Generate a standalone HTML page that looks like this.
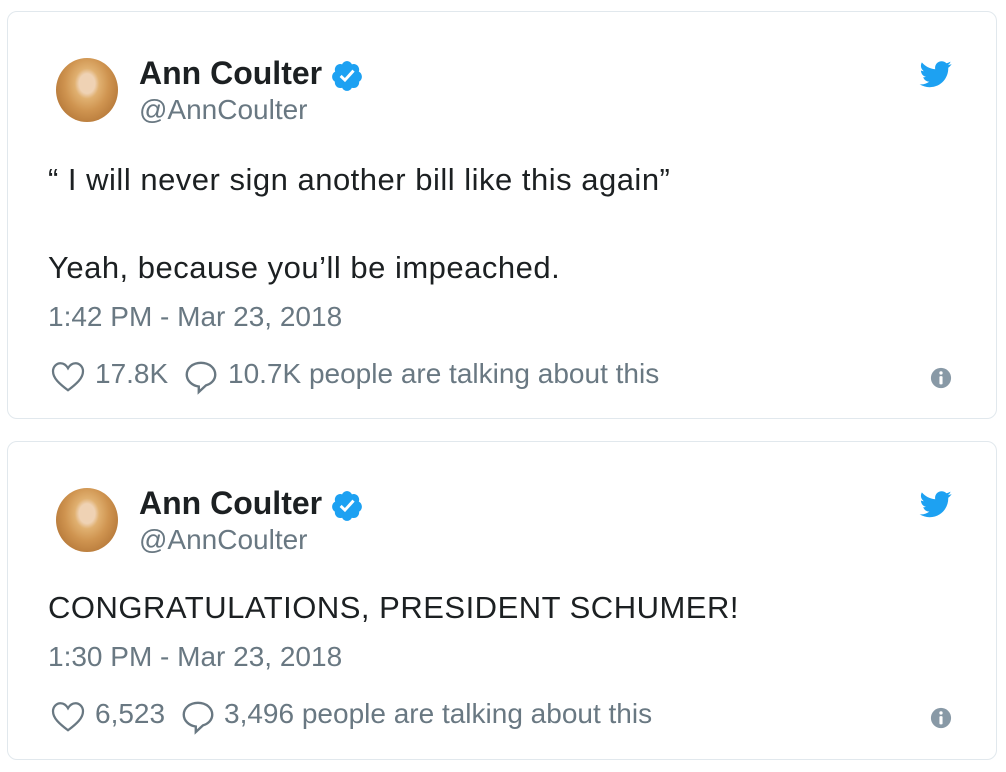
<!DOCTYPE html>
<html><head><style>
body{margin:0;background:#fff;width:1006px;height:772px;position:relative;font-family:"Liberation Sans",Arial,sans-serif;overflow:hidden}
.card{position:absolute;left:7px;width:988px;border:1px solid #e1e8ed;border-radius:10px;background:#fff}
.av{position:absolute;left:56px;width:62px;height:64px;border-radius:50%;background:radial-gradient(ellipse at 50% 40%,#efd2b4 0 18%,#e0b070 28%,#cf9450 50%,#b97c3c 75%,#fff 78%)}
.t{position:absolute;white-space:nowrap;line-height:40px}
.name{left:139px;font-size:32px;font-weight:bold;color:#1c2022}
.handle{left:139px;font-size:28px;color:#697882}
.txt{left:48px;font-size:31px;letter-spacing:0.5px;color:#1c2022}
.date{left:48px;font-size:28px;color:#697882}
.stat{font-size:28px;color:#697882}
</style></head><body>
<svg width="0" height="0" style="position:absolute"><defs>
<symbol id="ver" viewBox="0 0 24 24"><path fill="#1da1f2" d="M22.5 12.5c0-1.58-.875-2.95-2.148-3.6.154-.435.238-.905.238-1.4 0-2.21-1.710-3.998-3.818-3.998-.47 0-.92.084-1.336.25C14.818 2.415 13.51 1.5 12 1.5s-2.816.917-3.437 2.250c-.415-.165-.866-.25-1.336-.25-2.110 0-3.818 1.790-3.818 4 0 .494.083.964.237 1.400-1.272.65-2.147 2.018-2.147 3.600 0 1.495.782 2.798 1.942 3.486-.02.17-.032.34-.032.514 0 2.210 1.708 4 3.818 4 .47 0 .92-.086 1.335-.25.62 1.334 1.926 2.25 3.437 2.25 1.512 0 2.818-.916 3.437-2.25.415.163.865.248 1.336.248 2.110 0 3.818-1.790 3.818-4 0-.174-.012-.344-.033-.513 1.158-.687 1.943-1.990 1.943-3.484z"/><path fill="#fff" d="M10.6 16.3l-3.8-3.6 1.4-1.5 2.3 2.2 5.3-5.9 1.6 1.4z"/></symbol>
<symbol id="bird" viewBox="0 0 24 24"><path fill="#1da1f2" d="M23.6 4.6c-.9.4-1.8.6-2.8.8 1-.6 1.8-1.6 2.1-2.7-.9.6-2 1-3.1 1.2-.9-1-2.2-1.5-3.6-1.5-2.7 0-4.9 2.2-4.9 4.9 0 .4 0 .8.1 1.1C7.4 8.2 3.8 6.2 1.4 3.3 1 4 .7 4.9.7 5.8c0 1.7.9 3.2 2.2 4.1-.8 0-1.6-.2-2.2-.6v.1c0 2.4 1.7 4.4 3.9 4.8-.4.1-.8.2-1.3.2-.3 0-.6 0-.9-.1.6 2 2.4 3.4 4.6 3.4-1.7 1.3-3.8 2.1-6.1 2.1-.4 0-.8 0-1.2-.1 2.2 1.4 4.8 2.2 7.5 2.2 9.1 0 14-7.5 14-14v-.6c1-.7 1.8-1.6 2.4-2.5z"/></symbol>
<symbol id="heart" viewBox="0 0 24 24"><path fill="none" stroke="#697882" stroke-width="1.5" d="M12 21.5C6 17 2 13.3 2 8.8 2 5.8 4.3 3.5 7 3.5c2.2 0 3.9 1.4 5 3.3 1.1-1.9 2.8-3.300 5-3.3 2.7 0 5 2.3 5 5.3 0 4.5-4 8.2-10 12.7z"/></symbol>
<symbol id="bub" viewBox="0 0 24 24"><path fill="none" stroke="#697882" stroke-width="1.5" d="M12 3C6.8 3 3 6.4 3 10.5c0 3.8 3.3 7 7.6 7.5v3.5l4.5-4.2C18.7 16.3 21 13.6 21 10.5 21 6.4 17.2 3 12 3z"/></symbol>
<symbol id="info" viewBox="0 0 24 24"><circle cx="12" cy="12" r="11" fill="#8899a6"/><circle cx="12" cy="6.5" r="1.8" fill="#fff"/><rect x="10.3" y="10" width="3.4" height="9" rx="1" fill="#fff"/></symbol>
</defs></svg>

<div class="card" style="top:11px;height:406px"></div>
<div class="av" style="top:58px"></div>
<div class="t name" style="top:53px">Ann Coulter</div>
<svg class="t" style="left:330px;top:59px" width="34" height="34"><use href="#ver"/></svg>
<div class="t handle" style="top:90px">@AnnCoulter</div>
<svg class="t" style="left:918px;top:58px" width="36" height="32"><use href="#bird"/></svg>
<div class="t txt" style="top:160px">“ I will never sign another bill like this again”</div>
<div class="t txt" style="top:248px">Yeah, because you’ll be impeached.</div>
<div class="t date" style="top:297px">1:42 PM - Mar 23, 2018</div>
<svg class="t" style="left:50px;top:358px" width="36" height="36"><use href="#heart"/></svg>
<div class="t stat" style="left:95px;top:354px">17.8K</div>
<svg class="t" style="left:182px;top:358px" width="38" height="38"><use href="#bub"/></svg>
<div class="t stat" style="left:228px;top:354px">10.7K people are talking about this</div>
<svg class="t" style="left:930px;top:367px" width="22" height="22"><use href="#info"/></svg>

<div class="card" style="top:441px;height:317px"></div>
<div class="av" style="top:488px"></div>
<div class="t name" style="top:483px">Ann Coulter</div>
<svg class="t" style="left:330px;top:489px" width="34" height="34"><use href="#ver"/></svg>
<div class="t handle" style="top:520px">@AnnCoulter</div>
<svg class="t" style="left:918px;top:488px" width="36" height="32"><use href="#bird"/></svg>
<div class="t txt" style="top:588px">CONGRATULATIONS, PRESIDENT SCHUMER!</div>
<div class="t date" style="top:637px">1:30 PM - Mar 23, 2018</div>
<svg class="t" style="left:50px;top:698px" width="36" height="36"><use href="#heart"/></svg>
<div class="t stat" style="left:95px;top:694px">6,523</div>
<svg class="t" style="left:179px;top:698px" width="38" height="38"><use href="#bub"/></svg>
<div class="t stat" style="left:224px;top:694px">3,496 people are talking about this</div>
<svg class="t" style="left:930px;top:707px" width="22" height="22"><use href="#info"/></svg>
</body></html>
